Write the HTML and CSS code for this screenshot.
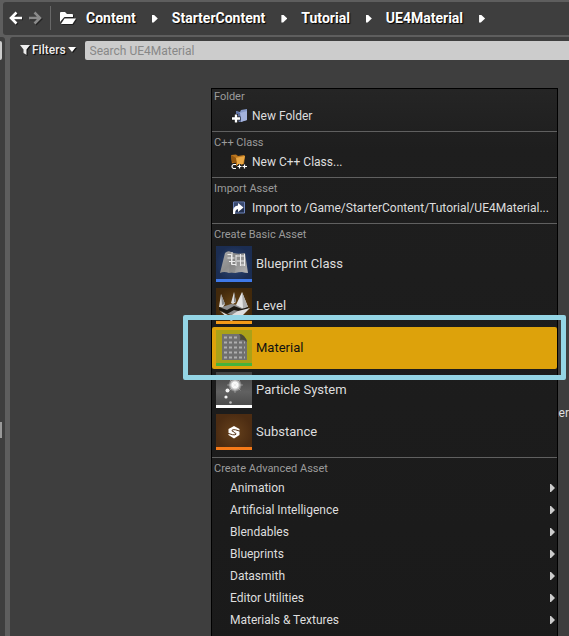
FILE: index.html
```html
<!DOCTYPE html>
<html lang="en">
<head>
<meta charset="utf-8">
<meta name="viewport" content="width=device-width, initial-scale=1">
<title>Content Browser</title>
<link rel="stylesheet" href="styles.css">
</head>
<body>
<header class="path-bar">
  <button class="nav" type="button" aria-label="Back"><svg width="14" height="14" viewBox="0 0 14 14"><path d="M13 7H3M7.500 1.500L2 7l5.500 5.500" fill="none" stroke="#fff" stroke-width="2.600"/></svg></button>
  <button class="nav nav-off" type="button" aria-label="Forward"><svg width="14" height="14" viewBox="0 0 14 14"><path d="M1 7h10M6.500 1.500L12 7l-5.500 5.500" fill="none" stroke="#8a8a8a" stroke-width="2.600"/></svg></button>
  <span class="divider"></span>
  <button class="nav folder" type="button" aria-label="Choose path"><svg width="17" height="14" viewBox="0 0 17 14"><path d="M0 11V2q0-1 1-1h4l2 2h5q1 0 1 1v2H5q-1 0-1.500 1z" fill="#fff"/><path d="M1 13l3.500-5.500H16L12.500 13z" fill="#fff"/></svg></button>
  <nav class="crumbs" aria-label="Path">
    <a href="#">Content</a><i class="crumb-arrow"></i>
    <a href="#">StarterContent</a><i class="crumb-arrow"></i>
    <a href="#">Tutorial</a><i class="crumb-arrow"></i>
    <a href="#">UE4Material</a><i class="crumb-arrow"></i>
  </nav>
</header>
<div class="workspace">
  <aside class="sources"><span class="source-field"></span><span class="source-thumb"></span></aside>
  <main class="assets">
    <div class="tools">
      <button class="filters" type="button"><svg width="10" height="10" viewBox="0 0 10 10"><path d="M0 0h10L6.500 4.500V10L3.500 8V4.500z" fill="#eee"/></svg><span>Filters</span><svg width="8" height="5" viewBox="0 0 8 5"><path d="M0 0h8L4 5z" fill="#fff"/></svg></button>
      <input class="search" type="text" aria-label="Search assets" placeholder="Search UE4Material">
    </div>
    <span class="asset-label">ner</span>
  </main>
</div>
<div class="menu">
  <section>
    <h2>Folder</h2>
    <button class="item" type="button">
      <svg width="16" height="16" viewBox="0 0 16 16"><path d="M5 3l4 1 1-2 6-1v11l-7 2-4-2z" fill="#879ac9"/><path d="M9 5l7-2v9l-6 2z" fill="#a3b2dc"/><path d="M5 3l4 2 1 9-5-2z" fill="#5c6e9f"/><path d="M5 6v9M0.500 10.500h9" stroke="#181818" stroke-width="4"/><path d="M5 6.500v8M1 10.500h8" stroke="#fff" stroke-width="2.400"/></svg>
      New Folder</button>
  </section>
  <section>
    <h2>C++ Class</h2>
    <button class="item" type="button">
      <svg width="16" height="16" viewBox="0 0 16 16"><path d="M0 1l5-.5L7 2l6-1 1 1-1 8-8 2-4-2z" fill="#bb751d"/><path d="M4 4l10-2-2 8-6 1z" fill="#e9a744"/><path d="M0 1l5 3 1 6-5-2z" fill="#94570f"/><g fill="none" stroke="#222" stroke-width="3"><path d="M5 10.500H2.500Q1 11 1 12.500t1.500 2H5M8.500 10v5M6 12.500h5M13.500 10v5M11 12.500h5"/></g><path d="M5 10.500H2.500Q1 11 1 12.500t1.500 2H5M8.500 10.500v4M6.500 12.500h4M13.500 10.500v4M11.500 12.500H16" fill="none" stroke="#fff" stroke-width="1.200"/></svg>
      New C++ Class...</button>
  </section>
  <section>
    <h2>Import Asset</h2>
    <button class="item" type="button">
      <svg width="16" height="16" viewBox="0 0 16 16"><path d="M2.500 2h11v11h-11z" fill="#253250" stroke="#6c83ba"/><path d="M3 3h10v4L3 11z" fill="#3a4a70"/><path d="M2 14q-1-8 5-8.500V3l5.500 4.500L7 12V9q-3 .5-3 5z" fill="#fff"/></svg>
      Import to /Game/StarterContent/Tutorial/UE4Material...</button>
  </section>
  <section>
    <h2>Create Basic Asset</h2>
    <button class="asset" type="button">
      <svg width="36" height="36" viewBox="0 0 36 36"><defs><radialGradient id="blue"><stop offset="0" stop-color="#2f4a7a"/><stop offset="1" stop-color="#1b2d52"/></radialGradient><linearGradient id="paper" x2="1" y2="1"><stop stop-color="#a8a8a8"/><stop offset=".5" stop-color="#8d8d8d"/><stop offset="1" stop-color="#b4b4b4"/></linearGradient></defs><path d="M0 0h36v36H0z" fill="url(#blue)"/><path d="M4 27L9 7q3-3 6-1 5 3 14 1l3 20q-3 0-6-1-3 0-7 1-4-1-6 0-5-2-9 0z" fill="url(#paper)"/><path d="M15 6l-2 21 6 0 2-19z" fill="#777" opacity=".35"/><g fill="none" stroke="#ececec" stroke-width="1"><path d="M11.500 8.500h4v10M16 6v13M20 9v11M24.500 8v12M28.500 8v12M11.500 12h7M20 10h9M13 15.500h6M21 15h8M16 18.500h4M24 19h5"/></g><path d="M0 33h36v3H0z" fill="#3f79e8"/></svg>
      Blueprint Class</button>
    <button class="asset" type="button">
      <svg width="36" height="36" viewBox="0 0 36 36"><defs><radialGradient id="brown"><stop offset="0" stop-color="#6b4716"/><stop offset="1" stop-color="#42290b"/></radialGradient></defs><path d="M0 0h36v36H0z" fill="url(#brown)"/><path d="M3 20l12-4 9 1 8 3-7 4-10 3-8-3z" fill="#8d8d8d"/><path d="M3 19L5 6l4 10-2 3z" fill="#d8d8d8"/><path d="M5 6l4 10-3 1z" fill="#888"/><path d="M15 15l3-11 2 10-3 2z" fill="#ddd"/><path d="M18 4l2 10h-2z" fill="#888"/><path d="M20 17L26 4l6 15-6 1z" fill="#e4e4e4"/><path d="M26 4l6 15-5 1z" fill="#b0b0b0"/><path d="M3 19l8 3 7-4 8 3 6-2v3l-5 2-9-2-7 4-8-4z" fill="#1b1710"/><path d="M4 23l10 5 8-5 12-3-8 8-11 5z" fill="#ddd"/><path d="M0 33h36v3H0z" fill="#f49a18"/></svg>
      Level</button>
    <div class="highlighted">
      <button class="asset selected" type="button">
        <svg width="36" height="36" viewBox="0 0 36 36"><path d="M0 0h36v36H0z" fill="#aaa118"/><path d="M6 4h19l6 6v20H6z" fill="#707070"/><path d="M8 7.500h15M8 12.500h21M8 17.500h21M8 22.500h21M8 27.500h21" stroke="#aeaeae" stroke-width="2" stroke-dasharray="3 2"/><path d="M23 4q6 0 8 8-3-3-7-2 1-4-1-6z" fill="#4b4b37"/><path d="M0 33h36v3H0z" fill="#46b43b"/></svg>
        Material</button>
      <span class="callout"></span>
    </div>
    <button class="asset" type="button">
      <svg width="36" height="36" viewBox="0 0 36 36"><defs><linearGradient id="grey" x2="0" y2="1"><stop stop-color="#424242"/><stop offset=".55" stop-color="#616161"/><stop offset="1" stop-color="#484848"/></linearGradient><radialGradient id="glow"><stop offset="0" stop-color="#fff"/><stop offset=".4" stop-color="#fff"/><stop offset="1" stop-color="#fff" stop-opacity="0"/></radialGradient></defs><path d="M0 0h36v36H0z" fill="url(#grey)"/><circle cx="19" cy="13" r="7" fill="url(#glow)"/><path d="M19 5v16M11 13h16M13.500 7.500l11 11M24.500 7.500l-11 11" stroke="#ddd" stroke-width=".4"/><g fill="#f4f4f4"><circle cx="11.500" cy="18.500" r="2"/><circle cx="10" cy="25" r="1.600"/><circle cx="14.500" cy="30.500" r="1.300" fill="#bbb"/></g><path d="M0 33h36v3H0z" fill="#fff"/></svg>
      Particle System</button>
    <button class="asset" type="button">
      <svg width="36" height="36" viewBox="0 0 36 36"><defs><radialGradient id="rust"><stop offset="0" stop-color="#65401b"/><stop offset="1" stop-color="#4c2c12"/></radialGradient></defs><path d="M0 0h36v36H0z" fill="url(#rust)"/><path d="M18 12l5.500 3v6L18 24.500 12.500 21v-6z" fill="#fff"/><path d="M24 17.200l-4.500-1.400q-3-.5-3.500.5t2 1.700M12 19.300l4.500 1.400q3 .5 3.500-.5t-2-1.700" fill="none" stroke="#573416" stroke-width="1"/><path d="M0 33h36v3H0z" fill="#f77a18"/></svg>
      Substance</button>
  </section>
  <section>
    <h2>Create Advanced Asset</h2>
    <button class="item sub" type="button">Animation</button>
    <button class="item sub" type="button">Artificial Intelligence</button>
    <button class="item sub" type="button">Blendables</button>
    <button class="item sub" type="button">Blueprints</button>
    <button class="item sub" type="button">Datasmith</button>
    <button class="item sub" type="button">Editor Utilities</button>
    <button class="item sub" type="button">Materials &amp; Textures</button>
    <div class="more"></div>
  </section>
</div>
</body>
</html>
```
FILE: styles.css
```css
* { box-sizing: border-box; }

body {
  margin: 0;
  height: 100vh;
  overflow: hidden;
  display: flex;
  flex-direction: column;
  gap: 2px;
  padding-top: 2px;
  background: #5e5e5e;
  color: #dedede;
  font: 13px/16px Roboto, "Liberation Sans", sans-serif;
}

button {
  border: 0;
  padding: 0;
  background: none;
  color: inherit;
  font: inherit;
  text-align: left;
}

svg { display: block; flex: none; }

.path-bar {
  display: flex;
  align-items: center;
  height: 33px;
  margin-left: 3px;
  padding: 0 0 2px 6px;
  border-radius: 3px 0 0 3px;
  background: #3e3e3e;
}

.nav { filter: drop-shadow(1px 1px 0 #222); }
.nav-off { margin-left: 5px; }
.divider { width: 1px; height: 24px; margin: 0 9px 0 8px; background: #686868; }

.crumbs {
  display: flex;
  align-items: center;
  margin-left: 9px;
  font-size: 14px;
  font-weight: 700;
}

.crumbs a {
  color: #fff;
  text-decoration: none;
  text-shadow: 1px 1px 1px #000;
}

.crumb-arrow {
  width: 6px;
  height: 8px;
  margin: 2px 14px 0 16px;
  background: #fff;
  clip-path: polygon(0 0, 30% 0, 100% 50%, 30% 100%, 0 100%);
}

.workspace { display: flex; flex: 1; gap: 5px; min-height: 0; }

.sources {
  display: flex;
  flex-direction: column;
  justify-content: space-between;
  width: 5px;
  padding: 4px 3px 198px 0;
  border-radius: 0 3px 0 0;
  background: #3e3e3e;
}

.source-field { height: 19px; border-radius: 0 2px 2px 0; background: #ccc; }
.source-thumb { height: 16px; background: #999; }

.assets {
  flex: 1;
  min-width: 0;
  display: flex;
  flex-direction: column;
  justify-content: space-between;
  padding: 4px 0 215px 10px;
  border-radius: 3px 0 0 0;
  background: #3e3e3e;
}

.tools { display: flex; align-items: center; gap: 9px; }

.filters {
  display: flex;
  align-items: center;
  gap: 2px;
  padding-bottom: 2px;
  color: #eee;
  font-size: 12px;
  font-weight: 500;
  text-shadow: 1px 1px 1px #000;
}

.filters svg { filter: drop-shadow(1px 1px 0 #111); }

.search {
  flex: 1;
  min-width: 0;
  height: 19px;
  border: 0;
  border-radius: 2px 0 0 2px;
  padding: 0 5px;
  background: #ccc;
  color: #222;
  font: inherit;
  font-size: 12px;
}

.search::placeholder { color: #888; opacity: 1; }

.asset-label { align-self: flex-end; font-size: 12px; }

.menu {
  position: absolute;
  top: 88px;
  left: 211px;
  right: 11px;
  border: 1px solid #000;
  background: linear-gradient(#252525, #1e1e1e 60px, #1a1a1a);
}

.menu section { padding-bottom: 4px; }
.menu section + section { border-top: 1px solid #606060; }

.menu h2 {
  margin: 0;
  padding: 3px 2px 0;
  color: #9b9b9b;
  font-size: 11px;
  font-weight: 400;
  line-height: 16px;
}

.menu section:first-child h2 { padding-top: 0; }

.item {
  display: flex;
  align-items: center;
  gap: 5px;
  width: 100%;
  height: 22px;
  padding-left: 19px;
  font-size: 12px;
  white-space: nowrap;
}

.sub { justify-content: space-between; padding: 0 2px 0 18px; }

.sub::after {
  content: "";
  width: 5px;
  height: 8px;
  background: #ccc;
  clip-path: polygon(0 0, 20% 0, 100% 50%, 20% 100%, 0 100%);
}

.more { height: 22px; }

.asset {
  display: flex;
  align-items: center;
  gap: 4px;
  width: 100%;
  height: 42px;
  padding-left: 4px;
}

.highlighted { position: relative; z-index: 1; }
.selected { border-radius: 2px; background: #dda20b; color: #111; }

.callout {
  position: absolute;
  inset: -12px -9px -11px -29px;
  border: 5px solid #94d5e5;
  border-radius: 2px;
  pointer-events: none;
}
```
